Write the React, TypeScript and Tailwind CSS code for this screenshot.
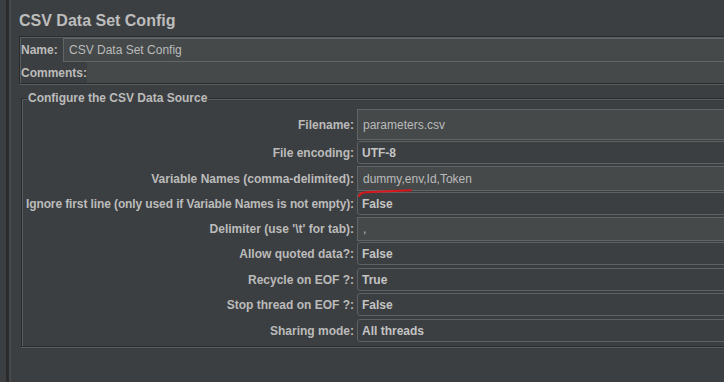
import React from 'react';

type Row = {
  label: string;
  value: string;
  kind: 'text' | 'combo';
  slot: string;
  box: string;
  tight?: boolean;
  mark?: boolean;
};

const rows: Row[] = [
  { label: 'Filename:', value: 'parameters.csv', kind: 'text', slot: 'h-[32px]', box: 'h-[31px]' },
  { label: 'File encoding:', value: 'UTF-8', kind: 'combo', slot: 'h-[25px]', box: 'h-[23px]' },
  { label: 'Variable Names (comma-delimited):', value: 'dummy,env,Id,Token', kind: 'text', slot: 'h-[26px]', box: 'h-[25px]', mark: true },
  { label: 'Ignore first line (only used if Variable Names is not empty):', value: 'False', kind: 'combo', slot: 'h-[25px]', box: 'h-[23px]', tight: true },
  { label: "Delimiter (use '\\t' for tab):", value: ',', kind: 'text', slot: 'h-[25px]', box: 'h-[24px]' },
  { label: 'Allow quoted data?:', value: 'False', kind: 'combo', slot: 'h-[26px]', box: 'h-[23px]' },
  { label: 'Recycle on EOF ?:', value: 'True', kind: 'combo', slot: 'h-[25px]', box: 'h-[23px]' },
  { label: 'Stop thread on EOF ?:', value: 'False', kind: 'combo', slot: 'h-[26px]', box: 'h-[23px]' },
  { label: 'Sharing mode:', value: 'All threads', kind: 'combo', slot: 'h-[27px]', box: 'h-[23px]' },
];

const FieldRow: React.FC<{ row: Row }> = ({ row }) => (
  <div className={`flex items-start ${row.slot}`}>
    <div
      className={`w-[332px] shrink-0 flex items-center justify-end whitespace-nowrap font-bold text-[12px] ${row.tight ? 'tracking-[-0.11px]' : ''} ${row.box}`}
    >
      {row.label}
    </div>
    {row.kind === 'text' ? (
      <div
        className={`relative ml-[3px] flex-1 flex items-center pl-[5px] bg-[#45494a] border border-[#626566] text-[12px] text-[#bbbbbb] ${row.box}`}
      >
        {row.value}
        {row.mark && (
          <svg className="absolute left-0 top-[21px] overflow-visible" width="56" height="10" viewBox="0 0 56 10">
            <path d="M1 8 Q2.5 4.5 8 4.2 L53 2.2" fill="none" stroke="#d8161b" strokeWidth="2" strokeLinecap="round" />
          </svg>
        )}
      </div>
    ) : (
      <div
        className={`ml-[3px] flex-1 flex items-center pl-[4px] rounded-[3px] border border-[#5e6162] bg-[#3c3f41] font-bold text-[12px] text-[#c4c4c4] ${row.box}`}
      >
        {row.value}
      </div>
    )}
  </div>
);

export default function App() {
  return (
    <div className="w-[724px] h-[382px] overflow-hidden flex bg-[#3c3f41] text-[#bbbbbb] font-['Liberation_Sans',Arial,sans-serif]">
      <div className="w-[6px] shrink-0" />
      <div className="w-[3px] shrink-0 bg-[#2b2b2b]" />
      <div className="w-[2px] shrink-0 bg-[#46494b]" />
      <div className="w-[900px] shrink-0 pl-[8px]">
        <h1 className="h-[36px] pt-[11px] text-[16px] leading-[20px] font-bold text-[#bdbdbd]">CSV Data Set Config</h1>

        <div className="h-[48px] border border-r-0 border-[#2b2b2b] pt-[1px] shadow-[inset_1px_1px_0_#5a5d5f,0_1px_0_#5a5d5f]">
          <div className="flex h-[24px]">
            <div className="w-[43px] shrink-0 pl-[1px] flex items-center font-bold text-[12px]">Name:</div>
            <div className="flex-1 flex items-center pl-[5px] bg-[#45494a] border border-[#626566] text-[12px]">
              CSV Data Set Config
            </div>
          </div>
          <div className="flex h-[21px]">
            <div className="shrink-0 pl-[1px] flex items-center font-bold text-[12px]">Comments:</div>
            <div className="flex-1 bg-[#45494a]" />
          </div>
        </div>

        <fieldset className="mt-[7px] ml-[2px] border border-r-0 border-[#2b2b2b] pt-[4px] shadow-[inset_1px_1px_0_#5a5d5f,0_1px_0_#5a5d5f]">
          <legend className="ml-[5px] px-[1px] bg-[#3c3f41] font-bold text-[12px] leading-[14px]">
            Configure the CSV Data Source
          </legend>
          {rows.map((row) => (
            <FieldRow key={row.label} row={row} />
          ))}
        </fieldset>
      </div>
    </div>
  );
}
